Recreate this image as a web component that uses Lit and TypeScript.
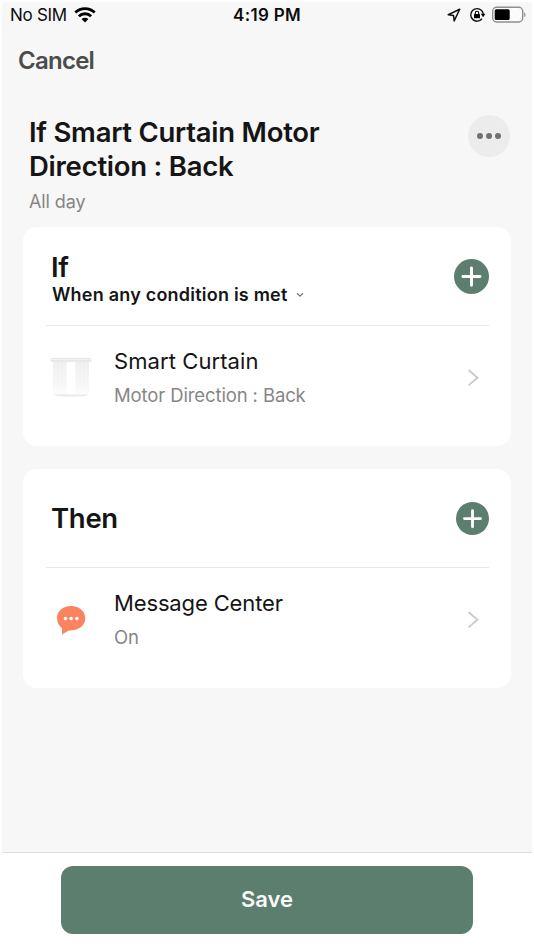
import { LitElement, html, css } from "lit";
import { customElement, property } from "lit/decorators.js";

@customElement("add-button")
class AddButton extends LitElement {
  @property({ type: Number }) size = 34;
  static styles = css`
    :host { display: block; line-height: 0; }
  `;
  render() {
    return html`<svg width=${this.size} height=${this.size} viewBox="0 0 34 34">
      <circle cx="17" cy="17" r="17" fill="#5b7e6f" />
      <path d="M17 8.8v16.6M8.7 17.1h16.6" stroke="#fff" stroke-width="2.9" stroke-linecap="round" />
    </svg>`;
  }
}

@customElement("scene-row")
class SceneRow extends LitElement {
  @property() name = "";
  @property() detail = "";
  static styles = css`
    :host { display: flex; align-items: center; height: 104px; }
    .icon { width: 44px; margin-left: 3px; display: flex; justify-content: center; }
    .text { flex: 1; margin-left: 21px; display: flex; flex-direction: column; gap: 6px; white-space: nowrap; }
    .name { font-size: 22px; line-height: 28px; letter-spacing: var(--name-spacing, 0); color: #151515; }
    .detail { font-size: 18.5px; line-height: 28px; letter-spacing: -0.12px; color: #868686; }
    .chevron { display: block; margin-right: 10px; }
  `;
  render() {
    return html`
      <div class="icon"><slot></slot></div>
      <div class="text">
        <div class="name">${this.name}</div>
        <div class="detail">${this.detail}</div>
      </div>
      <svg class="chevron" width="12" height="18" viewBox="0 0 12 18">
        <path d="M1.5 1 10.500 8.700 1.500 16.400" fill="none" stroke="#c9c9c9" stroke-width="1.8" />
      </svg>
    `;
  }
}

@customElement("app-root")
class AppRoot extends LitElement {
  static styles = css`
    :host { display: block; font-family: Inter, "Liberation Sans", sans-serif; color: #151515; }
    svg { display: block; }
    .screen { box-sizing: border-box; width: 534px; height: 950px; background: #fff; padding: 2px 2px 0; display: flex; flex-direction: column; white-space: nowrap; }
    .body { box-sizing: border-box; height: 851px; background: #f7f7f7; border-bottom: 1px solid #dedede; display: flex; flex-direction: column; }
    .status { display: grid; grid-template-columns: 1fr auto 1fr; align-items: center; height: 26px; padding: 0 6px 0 8px; color: #0c0c0c; font-size: 17px; }
    .carrier { display: flex; align-items: center; gap: 7px; letter-spacing: -0.3px; }
    .time { font-weight: 600; letter-spacing: 0.3px; margin-right: 2px; }
    .indicators { display: flex; align-items: center; justify-content: flex-end; }
    .indicators svg { margin-top: -1px; }
    .rotation { margin-left: 8px; }
    .battery { margin-left: 6px; }
    .nav { height: 62px; display: flex; align-items: center; padding: 2px 0 0 16px; box-sizing: border-box; font-size: 24px; font-weight: 600; letter-spacing: -0.75px; color: #4c4c4c; }
    .heading { display: flex; justify-content: space-between; padding: 26px 22.5px 0 26px; }
    h1 { margin: 0; padding-left: 1px; font-size: 27.5px; line-height: 33.5px; font-weight: 600; letter-spacing: -0.25px; }
    .period { margin-top: 7px; padding-left: 1px; font-size: 18px; line-height: 24px; letter-spacing: -0.1px; color: #868686; }
    .more { width: 42px; height: 42px; border-radius: 50%; background: #ececec; display: flex; align-items: center; justify-content: center; gap: 3px; margin-top: -1.5px; }
    .more i { width: 6px; height: 6px; border-radius: 50%; background: #707070; }
    .card { box-sizing: border-box; height: 219px; margin: 13px 21px 0; padding: 0 22px 0 23px; border-radius: 14px; background: #fff; }
    .card + .card { margin-top: 23px; }
    .head { box-sizing: border-box; height: 99px; padding-left: 4px; display: flex; align-items: center; justify-content: space-between; border-bottom: 1px solid #e8e8e8; }
    h2 { margin: 0; padding-left: 1px; font-size: 27.5px; line-height: 31px; font-weight: 600; letter-spacing: -0.3px; }
    .mode { display: flex; align-items: center; gap: 8px; font-size: 18px; line-height: 24px; font-weight: 600; letter-spacing: 0.22px; padding-left: 2px; }
    .if-text { padding-top: 6px; }
    .curtain { --name-spacing: 0.08px; }
    .message { --name-spacing: -0.14px; }
    .footer { flex: 1; display: flex; justify-content: center; padding-top: 13px; }
    .save { width: 412px; height: 68px; border: 0; border-radius: 12px; background: #5b7e6f; color: #f8faf9; font: 600 22px Inter, "Liberation Sans", sans-serif; padding: 0 0 3px; }
  `;

  curtain() {
    return html`<svg width="44" height="44" viewBox="0 0 44 44">
      <defs>
        <linearGradient id="fabric" x2="0" y2="1">
          <stop offset="0" stop-color="#eeeeee" />
          <stop offset="0.6" stop-color="#f5f5f5" />
          <stop offset="1" stop-color="#fcfcfc" />
        </linearGradient>
        <linearGradient id="rail" x2="0" y2="1">
          <stop offset="0" stop-color="#e0e0e0" />
          <stop offset="0.5" stop-color="#f6f6f6" />
          <stop offset="1" stop-color="#d8d8d8" />
        </linearGradient>
        <linearGradient id="shade" x2="0" y2="1">
          <stop offset="0" stop-color="#e2e2e2" />
          <stop offset="1" stop-color="#fdfdfd" />
        </linearGradient>
      </defs>
      <path d="M5 38.6h34q-3 2.8-17 2.8T5 38.6z" fill="url(#shade)" />
      <path d="M4 6h13.5v32H4zM26.5 6H40v32H26.5z" fill="url(#fabric)" />
      <path d="M7 7v31M11 7v31M15 7v31M29 7v31M33 7v31M37 7v31" stroke="#fff" stroke-opacity="0.4" />
      <rect x="1.5" y="2" width="41" height="3.4" rx="1.5" fill="url(#rail)" />
    </svg>`;
  }

  bubble() {
    return html`<svg width="30" height="30" viewBox="0 0 30 30">
      <path d="M15 1C6.800 1 1 6.200 1 13c0 4.600 2 8 5 10.300V29.500L12.800 25.400C23 25.600 29.300 20.200 29.300 13.200 29.300 6.200 23.200 1 15 1z" fill="#fb835f" />
      <g fill="#fff"><circle cx="9.500" cy="13.600" r="1.800" /><circle cx="15.200" cy="13.600" r="1.800" /><circle cx="20.900" cy="13.600" r="1.800" /></g>
    </svg>`;
  }

  render() {
    return html`<div class="screen">
      <div class="body">
        <div class="status">
          <div class="carrier">
            <span>No SIM</span>
            <svg width="22" height="16" viewBox="0 0 22 16">
              <g fill="none" stroke="#000" stroke-width="2.8">
                <path d="M1.300 5.500a14 14 0 0 1 19.400 0" />
                <path d="M4.900 9.200a8.800 8.800 0 0 1 12.200 0" />
              </g>
              <path d="M7.600 12a4.900 4.900 0 0 1 6.800 0L11 15.500z" />
            </svg>
          </div>
          <div class="time">4:19 PM</div>
          <div class="indicators">
            <svg width="14" height="14" viewBox="0 0 14 14">
              <path d="M12.700 1.200 1.200 6.700l5.300.9.700 5.300z" fill="none" stroke="#111" stroke-width="1.5" stroke-linejoin="round" />
            </svg>
            <svg class="rotation" width="17" height="16" viewBox="0 0 17 16">
              <path d="M12.600 3.500A6.300 6.300 0 1 0 13 11.800M12.600 3.500A6.300 6.300 0 0 1 14.200 7" fill="none" stroke="#111" stroke-width="1.4" />
              <path d="M11.800 6.800h4.600l-2.300 3.400z" />
              <rect x="5" y="7" width="6" height="4.300" rx=".6" />
              <path d="M6.300 7.200V6a1.700 1.700 0 0 1 3.400 0v1.200" fill="none" stroke="#000" stroke-width="1.1" />
            </svg>
            <svg class="battery" width="34" height="17" viewBox="0 0 34 17">
              <rect x=".7" y="1.200" width="30" height="14.800" rx="4" fill="#fcfcfc" stroke="#8f8f8f" stroke-width="1.4" />
              <rect x="2.700" y="3.200" width="15" height="10.800" rx="1.5" />
              <path d="M32.200 6.200v4.800c1.700-.6 1.700-4.200 0-4.800z" fill="#8f8f8f" />
            </svg>
          </div>
        </div>
        <div class="nav">Cancel</div>
        <div class="heading">
          <div>
            <h1>If Smart Curtain Motor<br />Direction : Back</h1>
            <div class="period">All day</div>
          </div>
          <div class="more"><i></i><i></i><i></i></div>
        </div>
        <section class="card">
          <div class="head">
            <div class="if-text">
              <h2>If</h2>
              <div class="mode">
                When any condition is met
                <svg width="8" height="6" viewBox="0 0 8 6">
                  <path d="M1 1.200 4 4.200l3-3" fill="none" stroke="#777" stroke-width="1.3" />
                </svg>
              </div>
            </div>
            <add-button .size=${35}></add-button>
          </div>
          <scene-row class="curtain" name="Smart Curtain" detail="Motor Direction : Back">${this.curtain()}</scene-row>
        </section>
        <section class="card">
          <div class="head">
            <h2>Then</h2>
            <add-button .size=${33}></add-button>
          </div>
          <scene-row class="message" name="Message Center" detail="On">${this.bubble()}</scene-row>
        </section>
      </div>
      <div class="footer"><button class="save">Save</button></div>
    </div>`;
  }
}
